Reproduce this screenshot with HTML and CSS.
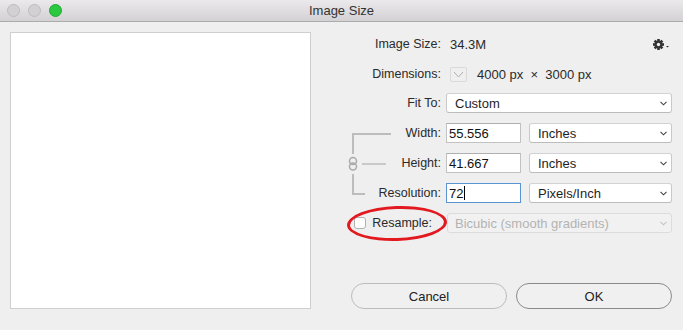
FILE: index.html
```html
<!DOCTYPE html>
<html lang="en">
<head>
    <meta charset="UTF-8">
    <meta name="viewport" content="width=device-width, initial-scale=1.0">
    <title>Image Size</title>
    <link rel="stylesheet" href="styles.css">
</head>
<body>
    <div class="window">
        <header class="titlebar">
            <div class="lights">
                <span class="light"></span>
                <span class="light"></span>
                <span class="light green"></span>
            </div>
            <h1 class="title">Image Size</h1>
        </header>
        <div class="content">
            <div class="preview"></div>
            <form class="settings">
                <div class="row">
                    <span class="label">Image Size:</span>
                    <div class="info">
                        <span>34.3M</span>
                        <span class="gear">
                            <svg width="17" height="11" viewBox="0 0 17 11">
                                <g transform="translate(5.5 5.5)" fill="#333">
                                    <circle r="4"/>
                                    <rect x="-1.3" y="-5.5" width="2.6" height="11"/>
                                    <rect x="-1.3" y="-5.5" width="2.6" height="11" transform="rotate(45)"/>
                                    <rect x="-1.3" y="-5.5" width="2.6" height="11" transform="rotate(90)"/>
                                    <rect x="-1.3" y="-5.5" width="2.6" height="11" transform="rotate(135)"/>
                                    <circle r="1.7" fill="#efefef"/>
                                </g>
                                <polygon points="13,7 16,7 14.5,8.5" fill="#333"/>
                            </svg>
                        </span>
                    </div>
                </div>
                <div class="row row-dims">
                    <span class="label">Dimensions:</span>
                    <div class="dims">
                        <span class="dims-toggle">
                            <svg width="11" height="7" viewBox="0 0 11 7"><path d="M1 1 L5.5 6 L10 1" fill="none" stroke="#b0b0b0" stroke-width="1"/></svg>
                        </span>
                        <span>4000 px &nbsp;×&nbsp; 3000 px</span>
                    </div>
                </div>
                <div class="row">
                    <span class="label">Fit To:</span>
                    <div class="select">
                        <span>Custom</span>
                        <svg class="chevron" width="7" height="5" viewBox="0 0 7 5"><path d="M0.5 0.8 L3.5 3.8 L6.5 0.8" fill="none" stroke="#444" stroke-width="1.1"/></svg>
                    </div>
                </div>
                <div class="linked">
                    <svg class="bracket" width="60" height="80" viewBox="0 0 60 80">
                        <g fill="none" stroke="#bcbcbc" stroke-width="2">
                            <path d="M50 11 H12 V31"/>
                            <path d="M12 51 V71 H24"/>
                            <path d="M21 41 H45" stroke-width="1.5"/>
                        </g>
                        <g fill="none" stroke="#a9a9a9" stroke-width="1.5">
                            <rect x="8.5" y="34.5" width="7" height="7" rx="3.5"/>
                            <rect x="8.5" y="40" width="7" height="7" rx="3.5"/>
                        </g>
                    </svg>
                    <div class="row">
                        <span class="label">Width:</span>
                        <div class="pair">
                            <div class="field">55.556</div>
                            <div class="select">
                                <span>Inches</span>
                                <svg class="chevron" width="7" height="5" viewBox="0 0 7 5"><path d="M0.5 0.8 L3.5 3.8 L6.5 0.8" fill="none" stroke="#444" stroke-width="1.1"/></svg>
                            </div>
                        </div>
                    </div>
                    <div class="row">
                        <span class="label">Height:</span>
                        <div class="pair">
                            <div class="field">41.667</div>
                            <div class="select">
                                <span>Inches</span>
                                <svg class="chevron" width="7" height="5" viewBox="0 0 7 5"><path d="M0.5 0.8 L3.5 3.8 L6.5 0.8" fill="none" stroke="#444" stroke-width="1.1"/></svg>
                            </div>
                        </div>
                    </div>
                    <div class="row">
                        <span class="label">Resolution:</span>
                        <div class="pair">
                            <div class="field focused">72<span class="caret"></span></div>
                            <div class="select">
                                <span>Pixels/Inch</span>
                                <svg class="chevron" width="7" height="5" viewBox="0 0 7 5"><path d="M0.5 0.8 L3.5 3.8 L6.5 0.8" fill="none" stroke="#444" stroke-width="1.1"/></svg>
                            </div>
                        </div>
                    </div>
                </div>
                <div class="row resample">
                    <span class="label check-label"><span class="checkbox"></span>Resample:</span>
                    <div class="select disabled">
                        <span>Bicubic (smooth gradients)</span>
                        <svg class="chevron" width="7" height="5" viewBox="0 0 7 5"><path d="M0.5 0.8 L3.5 3.8 L6.5 0.8" fill="none" stroke="#c4c4c4" stroke-width="1.1"/></svg>
                    </div>
                    <span class="highlight"></span>
                </div>
                <div class="buttons">
                    <button type="button" class="btn">Cancel</button>
                    <button type="button" class="btn default">OK</button>
                </div>
            </form>
        </div>
    </div>
</body>
</html>
```

FILE: styles.css
```css
body {
    margin: 0;
    background: #efefef;
    font-family: 'Liberation Sans', Arial, sans-serif;
    font-size: 12.5px;
    color: #2a2a2a;
}
.window {
    width: 683px;
    height: 330px;
    background: #efefef;
    border-bottom-left-radius: 5px;
    overflow: hidden;
}
.titlebar {
    height: 21px;
    display: grid;
    grid-template-columns: 1fr auto 1fr;
    align-items: center;
    background: linear-gradient(#ebe9eb, #d3d1d3);
    border-bottom: 1px solid #acacac;
}
.lights {
    display: flex;
    gap: 8px;
    padding-left: 7px;
}
.light {
    width: 11px;
    height: 11px;
    border-radius: 50%;
    background: #d2d0d2;
    border: 0.5px solid #bdbbbd;
}
.light.green {
    background: #2bc840;
    border-color: #22a834;
}
.title {
    margin: 0;
    font-size: 13px;
    font-weight: 400;
    color: #333;
}
.content {
    display: flex;
    padding: 10px 0 0 10px;
}
.preview {
    width: 301px;
    height: 277px;
    box-sizing: border-box;
    background: #fff;
    border: 1px solid #cfcfcf;
}
.settings {
    width: 331px;
    margin: 0 0 0 30px;
    padding-top: 2px;
    display: flex;
    flex-direction: column;
    gap: 10px;
}
.row {
    display: grid;
    grid-template-columns: 100px 1fr;
    column-gap: 5px;
    height: 20px;
    align-items: center;
    position: relative;
}
.row-dims {
    margin-bottom: -1px;
}
.label {
    text-align: right;
}
.info {
    display: flex;
    justify-content: space-between;
    align-items: center;
    padding: 0 2px 0 4px;
    font-size: 13px;
}
.gear {
    display: flex;
}
.dims {
    display: flex;
    align-items: center;
    gap: 10px;
    padding-left: 4px;
    font-size: 13px;
}
.dims-toggle {
    width: 17px;
    height: 15px;
    box-sizing: border-box;
    border: 1px solid #dadada;
    border-radius: 2px;
    background: #efefef;
    display: flex;
    align-items: center;
    justify-content: center;
}
.select {
    height: 20px;
    box-sizing: border-box;
    display: flex;
    align-items: center;
    justify-content: space-between;
    padding: 0 4px 0 8px;
    background: #fff;
    border: 1px solid #c9c9c9;
    border-top-color: #d2d2d2;
    border-bottom-color: #bcbcbc;
    border-radius: 3px;
    font-size: 13px;
    color: #1e1e1e;
}
.select.disabled {
    background: #f1f1f1;
    border-color: #dcdcdc;
    color: #b3b3b3;
    padding-left: 7px;
    margin-left: 1px;
}
.pair {
    display: grid;
    grid-template-columns: 75px 1fr;
    column-gap: 8px;
}
.field {
    height: 20px;
    box-sizing: border-box;
    padding-left: 2px;
    display: flex;
    align-items: center;
    background: #fff;
    border: 1px solid #c2c2c2;
    border-top-color: #b0b0b0;
    font-size: 13px;
    color: #111;
}
.field.focused {
    border-color: #5a95d3;
}
.caret {
    width: 1px;
    height: 14px;
    background: #000;
    margin-left: 1px;
}
.linked {
    position: relative;
    display: flex;
    flex-direction: column;
    gap: 10px;
}
.bracket {
    position: absolute;
    left: 0;
    top: 0;
    pointer-events: none;
}
.check-label {
    display: flex;
    align-items: center;
    justify-content: flex-end;
    gap: 6px;
    padding-right: 9px;
}
.checkbox {
    width: 12px;
    height: 12px;
    box-sizing: border-box;
    background: #fff;
    border: 1px solid #b0b0b0;
    border-radius: 3px;
}
.highlight {
    position: absolute;
    left: 6px;
    top: -7px;
    width: 100px;
    height: 35px;
    box-sizing: border-box;
    border: 3px solid #e2191f;
    border-radius: 50%;
    transform: rotate(-2deg);
    pointer-events: none;
}
.buttons {
    display: flex;
    gap: 9px;
    margin-top: 40px;
    padding-left: 10px;
}
.btn {
    width: 156px;
    height: 26px;
    border-radius: 13px;
    border: 1px solid #bcbcbc;
    background: #f0f0f0;
    font-family: 'Liberation Sans', Arial, sans-serif;
    font-size: 13px;
    color: #222;
    padding: 0;
}
.btn.default {
    border: 1.5px solid #8b8b8b;
}
```
